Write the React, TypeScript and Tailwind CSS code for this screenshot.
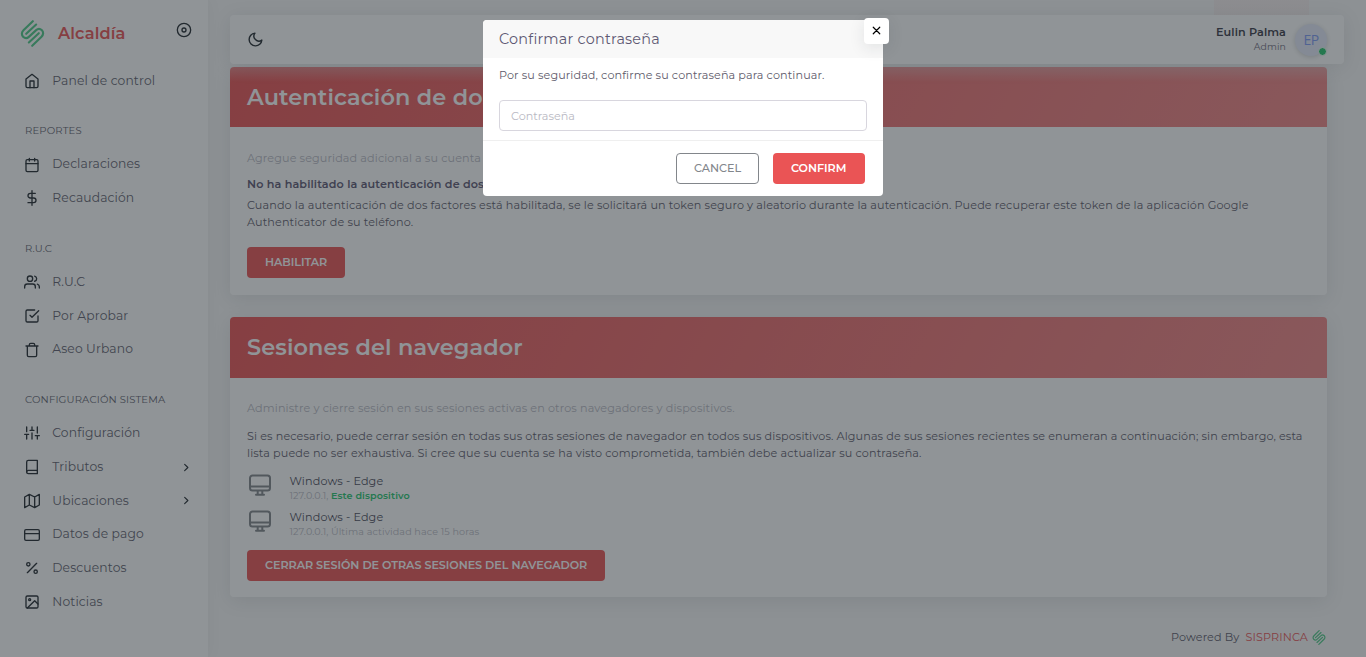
import type { ReactNode } from "react";

function Icon({ children, className }: { children: ReactNode; className: string }) {
  return (
    <svg
      viewBox="0 0 24 24"
      fill="none"
      stroke="currentColor"
      strokeWidth="2"
      strokeLinecap="round"
      strokeLinejoin="round"
      className={className}
    >
      {children}
    </svg>
  );
}

const icons = {
  home: (
    <>
      <path d="M3 9l9-7 9 7v11a2 2 0 0 1-2 2H5a2 2 0 0 1-2-2z" />
      <path d="M9 22V12h6v10" />
    </>
  ),
  calendar: (
    <>
      <rect x="3" y="4" width="18" height="18" rx="2" />
      <path d="M16 2v4M8 2v4M3 10h18" />
    </>
  ),
  dollar: (
    <>
      <path d="M12 1v22" />
      <path d="M17 5H9.5a3.5 3.5 0 0 0 0 7h5a3.5 3.5 0 0 1 0 7H6" />
    </>
  ),
  users: (
    <>
      <path d="M17 21v-2a4 4 0 0 0-4-4H5a4 4 0 0 0-4 4v2" />
      <circle cx="9" cy="7" r="4" />
      <path d="M23 21v-2a4 4 0 0 0-3-3.87M16 3.13a4 4 0 0 1 0 7.75" />
    </>
  ),
  check: (
    <>
      <path d="M9 11l3 3L22 4" />
      <path d="M21 12v7a2 2 0 0 1-2 2H5a2 2 0 0 1-2-2V5a2 2 0 0 1 2-2h11" />
    </>
  ),
  trash: (
    <path d="M3 6h18M19 6v14a2 2 0 0 1-2 2H7a2 2 0 0 1-2-2V6m3 0V4a2 2 0 0 1 2-2h4a2 2 0 0 1 2 2v2" />
  ),
  sliders: (
    <path d="M4 21v-7M4 10V3M12 21v-9M12 8V3M20 21v-5M20 12V3M1 14h6M9 8h6M17 16h6" />
  ),
  book: (
    <>
      <path d="M4 19.5A2.5 2.5 0 0 1 6.5 17H20" />
      <path d="M6.5 2H20v20H6.5A2.5 2.5 0 0 1 4 19.5v-15A2.5 2.5 0 0 1 6.5 2z" />
    </>
  ),
  map: <path d="M1 6v16l7-4 8 4 7-4V2l-7 4-8-4-7 4zM8 2v16M16 6v16" />,
  card: (
    <>
      <rect x="1" y="4" width="22" height="16" rx="2" />
      <path d="M1 10h22" />
    </>
  ),
  percent: (
    <>
      <path d="M19 5L5 19" />
      <circle cx="6.5" cy="6.5" r="2.5" />
      <circle cx="17.5" cy="17.5" r="2.5" />
    </>
  ),
  image: (
    <>
      <rect x="3" y="3" width="18" height="18" rx="2" />
      <circle cx="8.5" cy="8.5" r="1.5" />
      <path d="M21 15l-5-5L5 21" />
    </>
  ),
};

function Logo({ className }: { className: string }) {
  return (
    <svg
      viewBox="0 0 24.4 26.6"
      fill="none"
      stroke="#4fcb88"
      strokeWidth="2.1"
      strokeLinecap="round"
      strokeLinejoin="round"
      className={className}
    >
      <path d="M12.5 1.2L3.3 10.2C1.3 12.2 1.3 14.8 2.9 16.4S6.8 18.2 8.6 16.6L15.8 10C17.6 8.4 19.9 8.6 21.5 10.2S23.1 14.4 21.1 16.4L11.9 25.4" />
      <path d="M15.8 4.5L6 13.6M8.6 22.1L18.4 13" />
    </svg>
  );
}

type Item = { icon: ReactNode; label: string; arrow?: boolean };

function MenuItem({ icon, label, arrow }: Item) {
  return (
    <li className="flex h-[33.75px] items-center pl-6 pr-4 text-[12.32px] text-[#625f6e]">
      <Icon className="size-4 shrink-0 text-[#22292f]">{icon}</Icon>
      <span className="ml-[12.3px] flex-1">{label}</span>
      {arrow && (
        <Icon className="size-[11px] text-[#22292f]">
          <path strokeWidth="2.5" d="M8 19l7-7-7-7" />
        </Icon>
      )}
    </li>
  );
}

function MenuHeader({ children }: { children: ReactNode }) {
  return (
    <li className="h-[50px] pl-[25px] pt-[26.4px] text-[10.08px] leading-[14px] tracking-[0.15px] text-[#625f6e]">{children}</li>
  );
}

function Sidebar() {
  return (
    <aside className="h-full w-[208px] shrink-0 bg-white shadow-[0_0_15px_0_rgba(34,41,47,0.05)]">
      <div className="flex h-16 items-start pl-[20px] pr-4">
        <Logo className="mt-[20px] h-[27px] w-[25px]" />
        <span className="ml-[13px] mt-[22px] flex-1 text-[16.24px] leading-[22px] font-semibold text-[#ea5455]">Alcaldía</span>
        <Icon className="mt-[21.5px] size-4 text-[#22292f]">
          <circle cx="12" cy="12" r="10" />
          <circle cx="12" cy="12" r="3" />
        </Icon>
      </div>
      <ul>
        <MenuItem icon={icons.home} label="Panel de control" />
        <MenuHeader>REPORTES</MenuHeader>
        <MenuItem icon={icons.calendar} label="Declaraciones" />
        <MenuItem icon={icons.dollar} label="Recaudación" />
        <MenuHeader>R.U.C</MenuHeader>
        <MenuItem icon={icons.users} label="R.U.C" />
        <MenuItem icon={icons.check} label="Por Aprobar" />
        <MenuItem icon={icons.trash} label="Aseo Urbano" />
        <MenuHeader>CONFIGURACIÓN SISTEMA</MenuHeader>
        <MenuItem icon={icons.sliders} label="Configuración" />
        <MenuItem icon={icons.book} label="Tributos" arrow />
        <MenuItem icon={icons.map} label="Ubicaciones" arrow />
        <MenuItem icon={icons.card} label="Datos de pago" />
        <MenuItem icon={icons.percent} label="Descuentos" />
        <MenuItem icon={icons.image} label="Noticias" />
      </ul>
    </aside>
  );
}

function Navbar() {
  return (
    <header className="relative z-20 mt-[15px] flex h-[49px] w-[1114px] items-center rounded bg-white pl-[17px] pr-[17px] shadow-[0_3px_19px_0_rgba(34,41,47,0.1)]">
      <Icon className="size-[17px] text-[#22292f]">
        <path d="M21 12.79A9 9 0 1 1 11.21 3 7 7 0 0 0 21 12.79z" />
      </Icon>
      <div className="ml-auto flex flex-col items-end pb-px text-right">
        <span className="text-[11.2px] leading-[16px] font-semibold tracking-[0.1px] text-[#3b3b48]">Eulin Palma</span>
        <span className="text-[9.3px] leading-[14px] text-[#6e6b7b]">Admin</span>
      </div>
      <div className="relative ml-[9px] flex size-8 items-center justify-center rounded-full bg-[#e6ebfa] font-['Open_Sans','Noto_Sans',sans-serif] text-[14px] tracking-[-0.7px] text-[#7f9cf5] shadow-[0_1px_5px_rgba(34,41,47,0.2)]">
        EP
        <span className="absolute bottom-0 right-0 size-[9px] rounded-full border border-white bg-[#28c76f]" />
      </div>
    </header>
  );
}

function Card({ title, className, children }: { title: string; className: string; children: ReactNode }) {
  return (
    <section className={`w-[1097px] overflow-hidden rounded bg-white shadow-[0_4px_19px_0_rgba(34,41,47,0.1)] ${className}`}>
      <h2 className="flex h-[60.4px] items-center bg-[linear-gradient(118deg,#ea5455,rgba(234,84,85,0.7))] pl-[17px] pt-[1.5px] text-[22.4px] font-semibold text-white">
        {title}
      </h2>
      <div className="px-[17px]">{children}</div>
    </section>
  );
}

const primary =
  "flex h-[31px] items-center rounded bg-[#ea5455] px-[18px] text-[11.2px] font-semibold tracking-[-0.06px] text-white";

function Session({ children }: { children: ReactNode }) {
  return (
    <div className="flex h-9 items-start">
      <Icon className="ml-px size-6 text-[#82868b]">
        <path d="M4.500 2.500h15a2.500 2.500 0 0 1 2.500 2.500v10a2.500 2.500 0 0 1-2.500 2.500H4.500a2.500 2.500 0 0 1-2.500-2.500V5a2.500 2.500 0 0 1 2.500-2.500zM2 13.500h20M9.700 18v3.500M14.300 18v3.500M8 21.800h8" />
      </Icon>
      <div className="ml-[17.5px] text-[9.6px] leading-[13px] tracking-[0.11px] text-[#b9b9c3]">
        <div className="text-[11.2px] leading-[16px] tracking-[0.128px] text-[#4b4b5a]">Windows - Edge</div>
        {children}
      </div>
    </div>
  );
}

function Modal() {
  return (
    <div className="absolute inset-0 z-40 flex items-start justify-center bg-[rgba(34,41,47,0.5)] pt-5">
      <div role="dialog" className="relative h-[176px] w-[400px] rounded bg-white">
        <div className="flex h-[38px] items-center rounded-t bg-[#f8f8f8] pl-4 pt-px text-[14.4px] tracking-[0.22px] text-[#5e5873]">
          <h5>Confirmar contraseña</h5>
        </div>
        <button className="absolute -right-[6px] -top-[2px] flex h-[26px] w-[25px] items-center justify-center rounded bg-white pr-px text-black shadow-[0_4px_16px_0_rgba(34,41,47,0.1)]">
          <Icon className="mb-px size-[13px]">
            <path strokeWidth="2.2" d="M18 6L6 18M6 6l12 12" />
          </Icon>
        </button>
        <div className="h-[82px] px-4 pt-[9px]">
          <p className="text-[11.2px] leading-[16px] tracking-[0.11px] text-[#5e5b6b]">
            Por su seguridad, confirme su contraseña para continuar.
          </p>
          <input
            type="password"
            placeholder="Contraseña"
            className="mt-[17px] block h-[31px] w-[368px] rounded border border-[#d8d6de] px-[11px] text-[11.2px] tracking-normal placeholder:text-[#b9b9c3]"
          />
        </div>
        <div className="flex justify-end gap-[14px] border-t border-[#efefef] pr-[18px] pt-3">
          <button className="flex h-[31px] w-[83px] items-center justify-center rounded border border-[#82868b] text-[11.2px] font-medium tracking-normal text-[#82868b]">
            CANCEL
          </button>
          <button className={`w-[92px] ${primary}`}>CONFIRM</button>
        </div>
      </div>
    </div>
  );
}

export default function App() {
  return (
    <div className="relative flex h-[657px] w-[1366px] overflow-hidden bg-[#f8f8f8] font-['Montserrat','Inter',sans-serif] text-[11.2px] tracking-[0.123px] text-[#5e5b6b]">
      <div className="z-30">
        <Sidebar />
      </div>
      <main className="flex flex-1 flex-col pl-[22px]">
        <div className="absolute left-[1214px] top-0 h-[15px] w-[95px] bg-[#ea5455]" />
        <div className="pointer-events-none absolute left-0 top-0 z-10 h-[82px] w-full bg-[linear-gradient(180deg,rgba(248,248,248,0.95)_44%,rgba(248,248,248,0.46)_73%,rgba(255,255,255,0))]" />
        <Navbar />
        <Card title="Autenticación de dos factores" className="mt-[3px] h-[228px] shrink-0">
          <p className="pt-[22.5px] leading-[17px] text-[#b9b9c3]">
            Agregue seguridad adicional a su cuenta mediante la autenticación de dos factores.
          </p>
          <h6 className="mt-[9px] leading-[17px] font-semibold text-[#5e5873]">
            No ha habilitado la autenticación de dos factores.
          </h6>
          <p className="mt-1 leading-[17px]">
            Cuando la autenticación de dos factores está habilitada, se le solicitará un token seguro y aleatorio durante la autenticación. Puede recuperar este token de la aplicación Google Authenticator de su teléfono.
          </p>
          <button className={`mt-4 ${primary}`}>HABILITAR</button>
        </Card>
        <Card title="Sesiones del navegador" className="mt-[22.2px] h-[280px] shrink-0">
          <p className="pt-[22.5px] leading-[17px] text-[#b9b9c3]">
            Administre y cierre sesión en sus sesiones activas en otros navegadores y dispositivos.
          </p>
          <p className="mt-[11px] leading-[17px]">
            Si es necesario, puede cerrar sesión en todas sus otras sesiones de navegador en todos sus dispositivos. Algunas de sus sesiones recientes se enumeran a continuación; sin embargo, esta lista puede no ser exhaustiva. Si cree que su cuenta se ha visto comprometida, también debe actualizar su contraseña.
          </p>
          <div className="mt-[11px]">
            <Session>
              127.0.0.1, <span className="font-semibold text-[#28c76f]">Este dispositivo</span>
            </Session>
            <Session>127.0.0.1, Última actividad hace 15 horas</Session>
          </div>
          <button className={`mt-[5px] ${primary}`}>CERRAR SESIÓN DE OTRAS SESIONES DEL NAVEGADOR</button>
        </Card>
        <footer className="mt-[32px] flex w-[1097px] items-center justify-end pr-px">
          <span>Powered By</span>
          <span className="ml-[6px] text-[#ea5455]">SISPRINCA</span>
          <Logo className="ml-[4px] h-[15px] w-[14px]" />
        </footer>
      </main>
      <Modal />
    </div>
  );
}
